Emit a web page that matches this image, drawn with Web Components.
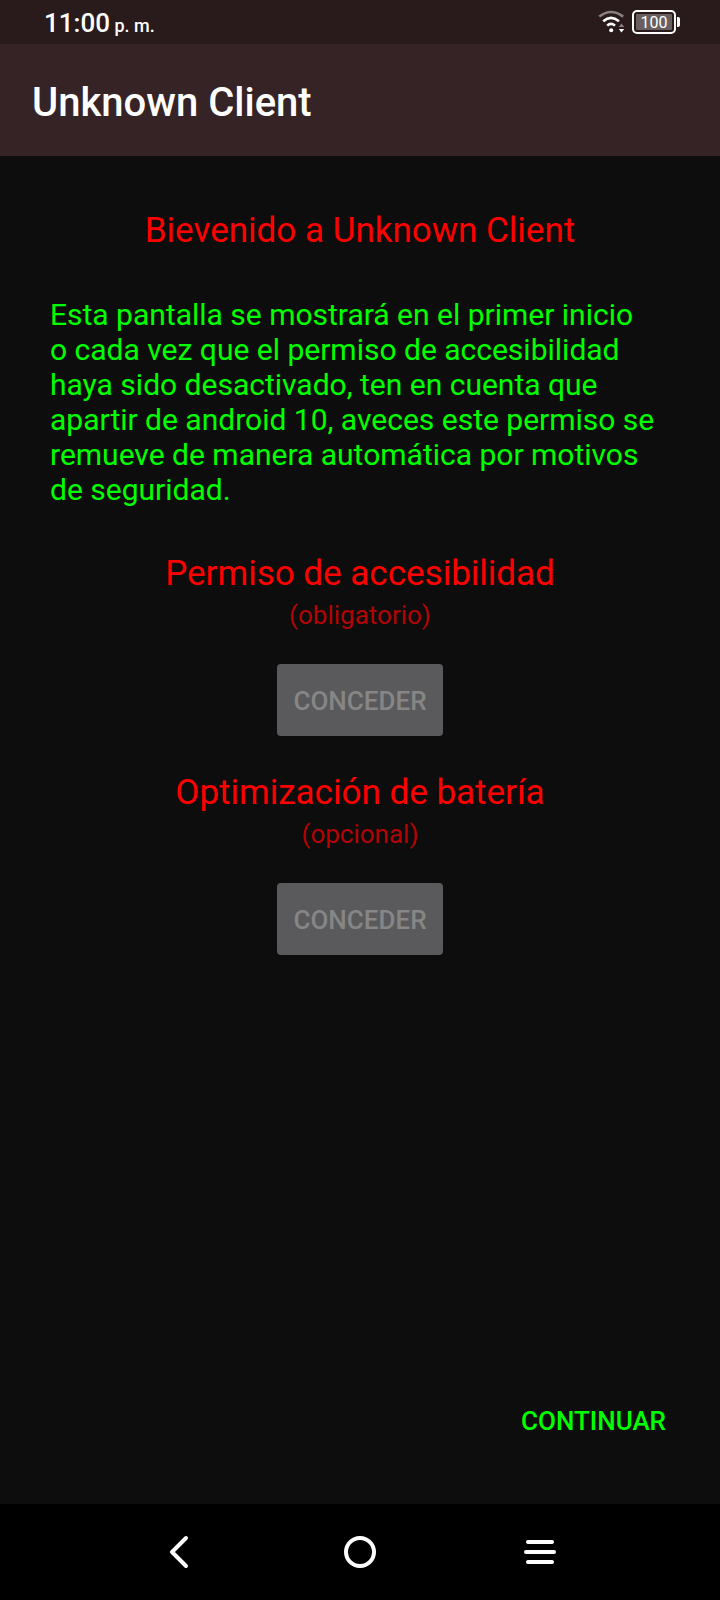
<!DOCTYPE html>
<html lang="es">
<head>
<meta charset="utf-8">
<meta name="viewport" content="width=device-width, initial-scale=1">
<title>Unknown Client</title>
<style>
  html, body { margin: 0; background: #0d0d0d; }
  body { font-family: Roboto, sans-serif; }
</style>
</head>
<body>
<client-app></client-app>

<script>
const define = (name, html) => customElements.define(name, class extends HTMLElement {
  constructor() {
    super();
    const template = document.createElement('template');
    template.innerHTML = html;
    this.attachShadow({ mode: 'open' }).append(template.content.cloneNode(true));
  }
});

define('wifi-icon', `
  <style>:host { display: block; width: 28px; height: 26px; } svg { display: block; }</style>
  <svg width="28" height="26" viewBox="0 0 28 26" fill="none" stroke="#fff" stroke-width="2.6" aria-hidden="true">
    <path d="M1.3 7.6Q13 -1.6 25.2 7.6" stroke="#8a7f7f"/>
    <path d="M5.2 12.2Q13 5.6 21 12.2"/>
    <path d="M9.2 16.6Q13 13 17 16.6"/>
    <circle cx="13.2" cy="21.2" r="2" fill="#fff" stroke="none"/>
    <path d="M20.8 18h5.4L23.5 14.4Z" fill="#8a7f7f" stroke="none"/>
    <path d="M20.8 20h5.4L23.5 23.6Z" fill="#fff" stroke="none"/>
  </svg>`);

define('battery-icon', `
  <style>
    :host { display: flex; align-items: center; }
    .cell { box-sizing: border-box; width: 44px; height: 24px; padding: 2px; border: 2px solid #fff; border-radius: 5px; }
    .level { height: 16px; border-radius: 1px; background: #695f5f; color: #fff; font-size: 16px; line-height: 17px; text-align: center; }
    .tip { width: 3px; height: 10px; margin-left: 1px; background: #fff; border-radius: 0 2px 2px 0; }
  </style>
  <div class="cell"><div class="level"><slot></slot></div></div><div class="tip"></div>`);

define('status-bar', `
  <style>
    :host { display: flex; align-items: center; justify-content: space-between; height: 44px; padding: 0 40px 0 44px; background: #291a1b; color: #fff; }
    .clock { padding-top: 4px; font-size: 26px; line-height: 32px; font-weight: 500; }
    .clock small { font-size: 18px; }
    .icons { display: flex; align-items: center; gap: 6px; }
  </style>
  <time class="clock">11:00<small> p. m.</small></time>
  <div class="icons"><wifi-icon></wifi-icon><battery-icon>100</battery-icon></div>`);

define('app-bar', `
  <style>
    :host { display: flex; align-items: center; height: 112px; padding: 0 32px; background: #362325; color: #fff; }
    h1 { margin: 0; padding-top: 6px; font-size: 40px; line-height: 48px; font-weight: 500; }
  </style>
  <h1><slot></slot></h1>`);

define('permission-section', `
  <style>
    :host { display: flex; flex-direction: column; align-items: center; text-align: center; }
    h2 { margin: 0 0 5px; color: #ff0000; font-size: 35px; line-height: 42px; font-weight: 400; }
    p { margin: 0 0 34px; color: #b20404; font-size: 26px; line-height: 30px; }
    button { height: 72px; padding: 2px 16px 0; border: 0; border-radius: 4px; background: #5a5a5c; color: #868686; font: 500 26px/30px Roboto, sans-serif; }
  </style>
  <h2 id="name"><slot name="title"></slot></h2>
  <p><slot name="note"></slot></p>
  <button type="button" disabled aria-describedby="name">CONCEDER</button>`);

define('nav-bar', `
  <style>
    :host { display: grid; grid-template-columns: repeat(3, 1fr); box-sizing: border-box; height: 96px; padding: 0 90px; background: #000; }
    button { display: grid; place-items: center; padding: 0; border: 0; background: none; color: #fff; }
    svg { display: block; fill: none; stroke: currentColor; stroke-width: 4; stroke-linecap: round; stroke-linejoin: round; }
  </style>
  <button type="button" aria-label="Atrás"><svg width="36" height="36" viewBox="0 0 36 36"><path d="M24 4L10 18L24 32"/></svg></button>
  <button type="button" aria-label="Inicio"><svg width="36" height="36" viewBox="0 0 36 36"><circle cx="18" cy="18" r="14"/></svg></button>
  <button type="button" aria-label="Recientes"><svg width="36" height="36" viewBox="0 0 36 36"><path d="M6 8H30M4 18H32M6 28H30"/></svg></button>`);

define('client-app', `
  <style>
    :host { display: flex; flex-direction: column; min-height: 100vh; background: #0d0d0d; }
    main { flex: 1; display: flex; flex-direction: column; padding: 54px 50px 58px; }
    h2 { margin: 0; color: #ff0000; font-size: 35px; line-height: 42px; font-weight: 400; text-align: center; }
    .intro { margin: 45px 0 46px; color: #00ff00; font-size: 30px; line-height: 35px; }
    .sections { display: grid; gap: 36px; }
    .next { align-self: flex-end; margin-top: auto; padding: 10px 4px; border: 0; background: none; color: #00ff00; font: 500 26px/30px Roboto, sans-serif; }
  </style>
  <status-bar></status-bar>
  <app-bar>Unknown Client</app-bar>
  <main>
    <h2>Bievenido a Unknown Client</h2>
    <p class="intro">Esta pantalla se mostrará en el primer inicio<br>o cada vez que el permiso de accesibilidad<br>haya sido desactivado, ten en cuenta que<br>apartir de android 10, aveces este permiso se<br>remueve de manera automática por motivos<br>de seguridad.</p>
    <div class="sections">
      <permission-section><span slot="title">Permiso de accesibilidad</span><span slot="note">(obligatorio)</span></permission-section>
      <permission-section><span slot="title">Optimización de batería</span><span slot="note">(opcional)</span></permission-section>
    </div>
    <button class="next" type="button">CONTINUAR</button>
  </main>
  <nav-bar></nav-bar>`);
</script>
</body>
</html>
